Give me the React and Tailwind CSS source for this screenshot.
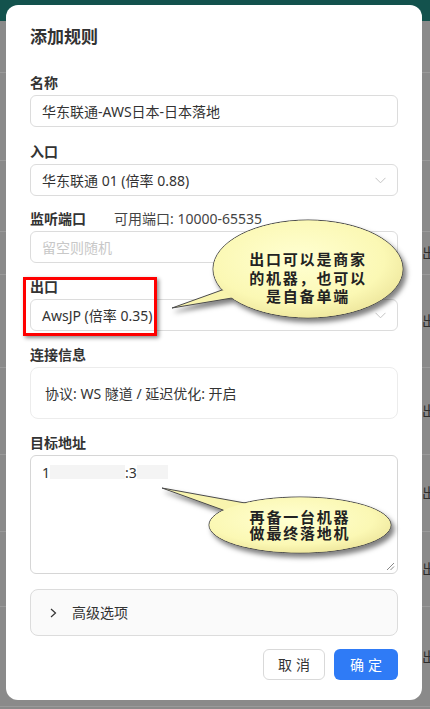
import React from "react";

function Chevron() {
  return (
    <svg width="11" height="7" viewBox="0 0 11 7" className="shrink-0">
      <path d="M0.5 0.8 L5.5 5.8 L10.5 0.8" fill="none" stroke="#c4c4c4" strokeWidth="1" />
    </svg>
  );
}

function Label({ children, extra }) {
  return (
    <div className="flex items-center h-[20px] mb-[2px] text-[14px] font-semibold text-[#333] leading-[20px]">
      <span>{children}</span>
      {extra}
    </div>
  );
}

function Callouts() {
  return (
    <svg className="absolute inset-0 pointer-events-none" width="430" height="709" viewBox="0 0 430 709">
      <defs>
        <radialGradient id="yg" cx="45%" cy="40%" r="65%">
          <stop offset="0%" stopColor="#ffffd2" />
          <stop offset="70%" stopColor="#fbf8b4" />
          <stop offset="100%" stopColor="#ece49a" />
        </radialGradient>
        <filter id="sh" x="-20%" y="-30%" width="150%" height="170%">
          <feDropShadow dx="3" dy="4" stdDeviation="2.5" floodColor="#000" floodOpacity="0.5" />
        </filter>
      </defs>
      <g filter="url(#sh)">
        <ellipse cx="308" cy="269" rx="95" ry="49" fill="url(#yg)" stroke="#4a4a4a" strokeWidth="1" />
        <polygon points="172,308 222,290 262,282 252,300 232,298" fill="#f8f4ae" stroke="#4a4a4a" strokeWidth="1" strokeLinejoin="round" />
        <ellipse cx="308" cy="269" rx="94.5" ry="48.5" fill="url(#yg)" />
      </g>
      <g fill="#222" fontFamily="'Noto Sans CJK SC', sans-serif" fontWeight="700" fontSize="15" letterSpacing="1.8" textAnchor="middle">
        <text x="308" y="265">出口可以是商家</text>
        <text x="308" y="284">的机器，也可以</text>
        <text x="308" y="302">是自备单端</text>
      </g>
      <g filter="url(#sh)">
        <ellipse cx="300" cy="525" rx="91" ry="28" fill="url(#yg)" stroke="#4a4a4a" strokeWidth="1" />
        <polygon points="162,488 245,503 272,515 242,522 223,510" fill="#f8f4ae" stroke="#4a4a4a" strokeWidth="1" strokeLinejoin="round" />
        <ellipse cx="300" cy="525" rx="90.5" ry="27.5" fill="url(#yg)" />
      </g>
      <g fill="#222" fontFamily="'Noto Sans CJK SC', sans-serif" fontWeight="700" fontSize="15" letterSpacing="1.8" textAnchor="middle">
        <text x="300" y="523">再备一台机器</text>
        <text x="300" y="539">做最终落地机</text>
      </g>
    </svg>
  );
}

function Background() {
  const rows = [
    { h: 52, t: "" },
    { h: 88, t: "" },
    { h: 71, t: "" },
    { h: 43, t: "出" },
    { h: 93, t: "出" },
    { h: 87, t: "出" },
    { h: 77, t: "出" },
    { h: 75, t: "出" },
    { h: 100, t: "出" },
  ];
  return (
    <div className="flex flex-col w-full h-full">
      <div className="h-[21px] bg-[#13524d] shrink-0" />
      {rows.map((r, i) => (
        <div key={i} className="flex justify-end items-center border-b border-[#9a9a9a] shrink-0 overflow-hidden" style={{ height: r.h }}>
          <span className="text-[14px] text-[#2d2d2d] leading-none translate-x-[6px]">{r.t}</span>
        </div>
      ))}
    </div>
  );
}

export default function App() {
  return (
    <div className="relative w-[430px] h-[709px] overflow-hidden bg-[#8a8a8a] font-['Noto_Sans','Noto_Sans_CJK_SC',sans-serif]">
      <Background />
      <div className="absolute left-[6px] top-[5px] w-[416px] h-[695px] bg-white rounded-[12px] px-[24px] pt-[20px] flex flex-col">
        <div className="text-[17px] font-semibold text-[#333] leading-[24px] h-[24px]">添加规则</div>

        <div className="mt-[24px]">
          <Label>名称</Label>
          <div className="h-[32px] border border-[#dcdcdc] rounded-[6px] px-[11px] flex items-center text-[14px] text-[#333]">
            华东联通-AWS日本-日本落地
          </div>
        </div>

        <div className="mt-[15px]">
          <Label>入口</Label>
          <div className="h-[32px] border border-[#dcdcdc] rounded-[6px] pl-[11px] pr-[11px] flex items-center justify-between text-[14px] text-[#333]">
            <span>华东联通 01 (倍率 0.88)</span>
            <Chevron />
          </div>
        </div>

        <div className="mt-[13px]">
          <Label extra={<span className="ml-[28px] font-normal text-[#444]">可用端口: 10000-65535</span>}>监听端口</Label>
          <div className="h-[32px] border border-[#dcdcdc] rounded-[6px] px-[11px] flex items-center text-[14px] text-[#c8c8c8]">
            留空则随机
          </div>
        </div>

        <div className="mt-[14px] relative">
          <Label>出口</Label>
          <div className="h-[32px] border border-[#dcdcdc] rounded-[6px] pl-[11px] pr-[11px] flex items-center justify-between text-[14px] text-[#333]">
            <span>AwsJP (倍率 0.35)</span>
            <Chevron />
          </div>
          <div className="absolute left-[-7px] top-[0px] w-[134px] h-[59px] border-[3px] border-[#ff0000] shadow-[2px_2px_4px_rgba(0,0,0,0.45)]" />
        </div>

        <div className="mt-[14px]">
          <Label>连接信息</Label>
          <div className="h-[52px] border border-[#ececec] rounded-[8px] px-[14px] flex items-center text-[14px] text-[#333]">
            协议: WS 隧道 / 延迟优化: 开启
          </div>
        </div>

        <div className="mt-[14px]">
          <Label>目标地址</Label>
          <div className="relative h-[119px] border border-[#d6d6d6] rounded-[6px] px-[11px] pt-[6px] text-[14px] text-[#333]">
            <div className="flex items-center h-[20px]">
              <span>1</span>
              <span className="inline-block w-[75px] h-[14px] bg-[#f4f4f4]" />
              <span>:3</span>
              <span className="inline-block w-[31px] h-[14px] bg-[#f4f4f4]" />
            </div>
            <svg className="absolute right-[2px] bottom-[2px]" width="9" height="9" viewBox="0 0 9 9">
              <path d="M8 1 L1 8 M8 4.5 L4.5 8" stroke="#888" strokeWidth="1" />
            </svg>
          </div>
        </div>

        <div className="mt-[15px] h-[47px] border border-[#dcdcdc] bg-[#fafafa] rounded-[8px] flex items-center pl-[19px] text-[14px] text-[#333]">
          <svg width="7" height="10" viewBox="0 0 7 10" className="mr-[15px]">
            <path d="M1 1 L5.5 5 L1 9" fill="none" stroke="#333" strokeWidth="1.2" />
          </svg>
          <span>高级选项</span>
        </div>

        <div className="mt-[13px] flex justify-end gap-[9px]">
          <div className="w-[62px] h-[31px] border border-[#d9d9d9] rounded-[6px] flex items-center justify-center text-[14px] text-[#333] tracking-[4px] pl-[4px]">
            取消
          </div>
          <div className="w-[64px] h-[31px] bg-[#2f7bf6] rounded-[6px] flex items-center justify-center text-[14px] text-white tracking-[4px] pl-[4px]">
            确定
          </div>
        </div>
      </div>
      <Callouts />
    </div>
  );
}
